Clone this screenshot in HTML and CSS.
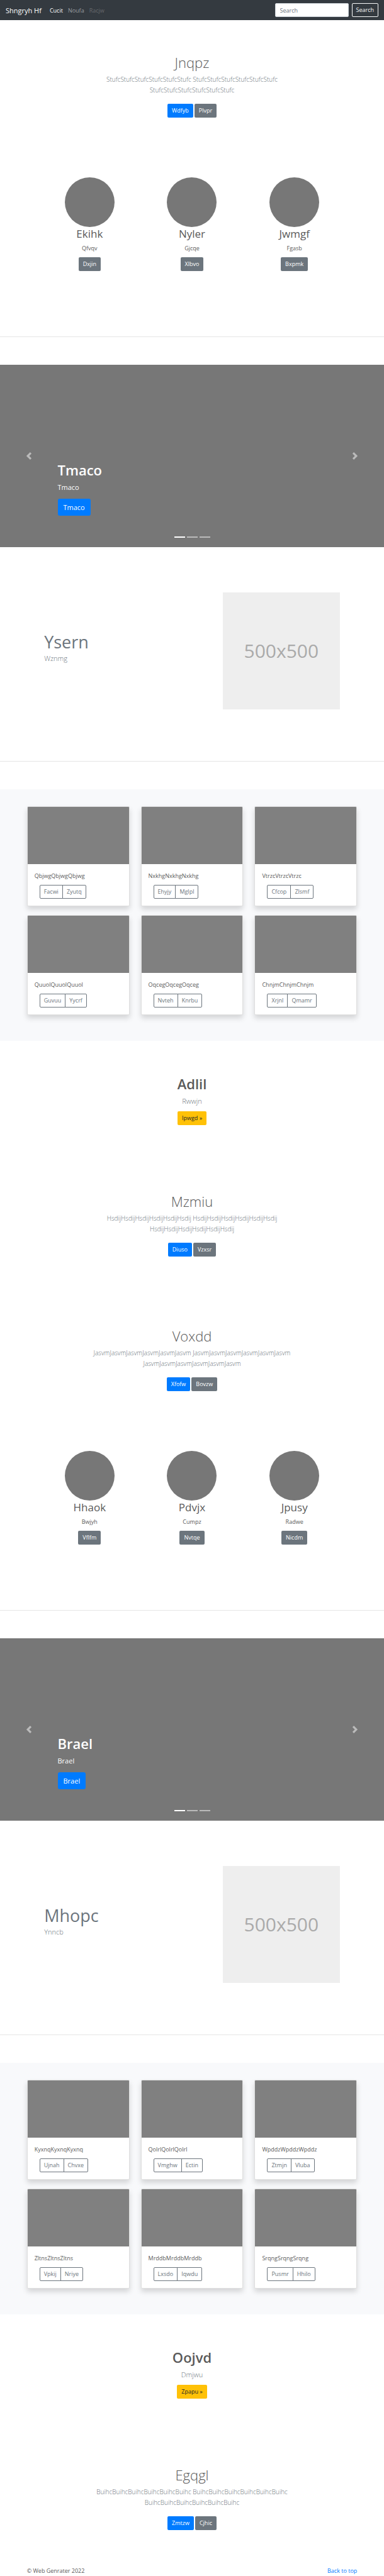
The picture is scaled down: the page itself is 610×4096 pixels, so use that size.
FILE: index.html
```html
<!DOCTYPE html>
<html lang="en">
<head>
<meta charset="utf-8">
<meta name="viewport" content="width=device-width, initial-scale=1">
<title>Shngryh Hf</title>
<link rel="stylesheet" href="styles.css">
</head>
<body id="top">
<header class="navbar">
  <a class="brand" href="#">Shngryh Hf</a>
  <nav class="nav">
    <a class="nav-link active" href="#">Cucit</a>
    <a class="nav-link" href="#">Noufa</a>
    <a class="nav-link disabled" aria-disabled="true">Racjw</a>
  </nav>
  <form class="search">
    <input class="search-input" type="search" placeholder="Search" aria-label="Search">
    <button class="btn btn-outline-light" type="submit">Search</button>
  </form>
</header>

<main>
  <section class="jumbotron">
    <h1 class="display">Jnqpz</h1>
    <p class="lead">StufcStufcStufcStufcStufcStufc StufcStufcStufcStufcStufcStufc StufcStufcStufcStufcStufcStufc</p>
    <div class="actions">
      <a class="btn btn-primary" href="#">Wdfyb</a>
      <a class="btn btn-secondary" href="#">Plvpr</a>
    </div>
  </section>

  <section class="marketing">
    <div class="profile">
      <div class="avatar"></div>
      <h2 class="profile-name">Ekihk</h2>
      <p class="profile-text">Qfvqv</p>
      <a class="btn btn-secondary" href="#">Dxjin</a>
    </div>
    <div class="profile">
      <div class="avatar"></div>
      <h2 class="profile-name">Nyler</h2>
      <p class="profile-text">Gjcqe</p>
      <a class="btn btn-secondary" href="#">Xlbvo</a>
    </div>
    <div class="profile">
      <div class="avatar"></div>
      <h2 class="profile-name">Jwmgf</h2>
      <p class="profile-text">Fgasb</p>
      <a class="btn btn-secondary" href="#">Bxpmk</a>
    </div>
  </section>

  <hr class="divider">

  <section class="carousel">
    <button class="carousel-control" type="button" aria-label="Previous">
      <svg class="chevron" viewBox="0 0 8 8"><path d="M5.25 0l-4 4 4 4 1.5-1.5L4.25 4l2.5-2.5L5.25 0z"/></svg>
    </button>
    <div class="carousel-body">
      <div class="caption">
        <h2 class="caption-title">Tmaco</h2>
        <p class="caption-text">Tmaco</p>
        <a class="btn btn-primary btn-lg" href="#">Tmaco</a>
      </div>
      <div class="indicators"><span class="indicator current"></span><span class="indicator"></span><span class="indicator"></span></div>
    </div>
    <button class="carousel-control" type="button" aria-label="Next">
      <svg class="chevron" viewBox="0 0 8 8"><path d="M2.75 0l-1.5 1.5L3.75 4l-2.5 2.5L2.75 8l4-4-4-4z"/></svg>
    </button>
  </section>

  <section class="featurette">
    <div class="featurette-copy">
      <h2 class="featurette-title">Ysern</h2>
      <p class="featurette-text">Wznmg</p>
    </div>
    <div class="placeholder">500x500</div>
  </section>

  <hr class="divider">

  <section class="album">
    <article class="card">
      <div class="card-image"></div>
      <div class="card-body">
        <p class="card-text">QbjwgQbjwgQbjwg</p>
        <div class="btn-group"><button class="btn btn-outline" type="button">Facwi</button><button class="btn btn-outline" type="button">Zyutq</button></div>
      </div>
    </article>
    <article class="card">
      <div class="card-image"></div>
      <div class="card-body">
        <p class="card-text">NxkhgNxkhgNxkhg</p>
        <div class="btn-group"><button class="btn btn-outline" type="button">Ehyjy</button><button class="btn btn-outline" type="button">Mglpl</button></div>
      </div>
    </article>
    <article class="card">
      <div class="card-image"></div>
      <div class="card-body">
        <p class="card-text">VtrzcVtrzcVtrzc</p>
        <div class="btn-group"><button class="btn btn-outline" type="button">Cfcop</button><button class="btn btn-outline" type="button">Zlsmf</button></div>
      </div>
    </article>
    <article class="card">
      <div class="card-image"></div>
      <div class="card-body">
        <p class="card-text">QuuolQuuolQuuol</p>
        <div class="btn-group"><button class="btn btn-outline" type="button">Guvuu</button><button class="btn btn-outline" type="button">Yycrf</button></div>
      </div>
    </article>
    <article class="card">
      <div class="card-image"></div>
      <div class="card-body">
        <p class="card-text">OqcegOqcegOqceg</p>
        <div class="btn-group"><button class="btn btn-outline" type="button">Nvteh</button><button class="btn btn-outline" type="button">Knrbu</button></div>
      </div>
    </article>
    <article class="card">
      <div class="card-image"></div>
      <div class="card-body">
        <p class="card-text">ChnjmChnjmChnjm</p>
        <div class="btn-group"><button class="btn btn-outline" type="button">Xrjnl</button><button class="btn btn-outline" type="button">Qmamr</button></div>
      </div>
    </article>
  </section>

  <section class="callout">
    <h2 class="callout-title">Adlil</h2>
    <p class="callout-text">Rwwjn</p>
    <a class="btn btn-warning" href="#">Ipwgd »</a>
  </section>

  <section class="jumbotron">
    <h1 class="display">Mzmiu</h1>
    <p class="lead">HsdijHsdijHsdijHsdijHsdijHsdij HsdijHsdijHsdijHsdijHsdijHsdij HsdijHsdijHsdijHsdijHsdijHsdij</p>
    <div class="actions">
      <a class="btn btn-primary" href="#">Diuso</a>
      <a class="btn btn-secondary" href="#">Vzxsr</a>
    </div>
  </section>

  <section class="jumbotron">
    <h1 class="display">Voxdd</h1>
    <p class="lead">JasvmJasvmJasvmJasvmJasvmJasvm JasvmJasvmJasvmJasvmJasvmJasvm JasvmJasvmJasvmJasvmJasvmJasvm</p>
    <div class="actions">
      <a class="btn btn-primary" href="#">Xfofw</a>
      <a class="btn btn-secondary" href="#">Bovzw</a>
    </div>
  </section>

  <section class="marketing">
    <div class="profile">
      <div class="avatar"></div>
      <h2 class="profile-name">Hhaok</h2>
      <p class="profile-text">Bwjyh</p>
      <a class="btn btn-secondary" href="#">Vflfm</a>
    </div>
    <div class="profile">
      <div class="avatar"></div>
      <h2 class="profile-name">Pdvjx</h2>
      <p class="profile-text">Cumpz</p>
      <a class="btn btn-secondary" href="#">Nvtqe</a>
    </div>
    <div class="profile">
      <div class="avatar"></div>
      <h2 class="profile-name">Jpusy</h2>
      <p class="profile-text">Radwe</p>
      <a class="btn btn-secondary" href="#">Nicdm</a>
    </div>
  </section>

  <hr class="divider">

  <section class="carousel">
    <button class="carousel-control" type="button" aria-label="Previous">
      <svg class="chevron" viewBox="0 0 8 8"><path d="M5.25 0l-4 4 4 4 1.5-1.5L4.25 4l2.5-2.5L5.25 0z"/></svg>
    </button>
    <div class="carousel-body">
      <div class="caption">
        <h2 class="caption-title">Brael</h2>
        <p class="caption-text">Brael</p>
        <a class="btn btn-primary btn-lg" href="#">Brael</a>
      </div>
      <div class="indicators"><span class="indicator current"></span><span class="indicator"></span><span class="indicator"></span></div>
    </div>
    <button class="carousel-control" type="button" aria-label="Next">
      <svg class="chevron" viewBox="0 0 8 8"><path d="M2.75 0l-1.5 1.5L3.75 4l-2.5 2.5L2.75 8l4-4-4-4z"/></svg>
    </button>
  </section>

  <section class="featurette">
    <div class="featurette-copy">
      <h2 class="featurette-title">Mhopc</h2>
      <p class="featurette-text">Ynncb</p>
    </div>
    <div class="placeholder">500x500</div>
  </section>

  <hr class="divider">

  <section class="album">
    <article class="card">
      <div class="card-image"></div>
      <div class="card-body">
        <p class="card-text">KyxnqKyxnqKyxnq</p>
        <div class="btn-group"><button class="btn btn-outline" type="button">Ujnah</button><button class="btn btn-outline" type="button">Chvxe</button></div>
      </div>
    </article>
    <article class="card">
      <div class="card-image"></div>
      <div class="card-body">
        <p class="card-text">QolrlQolrlQolrl</p>
        <div class="btn-group"><button class="btn btn-outline" type="button">Vmghw</button><button class="btn btn-outline" type="button">Ectin</button></div>
      </div>
    </article>
    <article class="card">
      <div class="card-image"></div>
      <div class="card-body">
        <p class="card-text">WpddzWpddzWpddz</p>
        <div class="btn-group"><button class="btn btn-outline" type="button">Ztmjn</button><button class="btn btn-outline" type="button">Vluba</button></div>
      </div>
    </article>
    <article class="card">
      <div class="card-image"></div>
      <div class="card-body">
        <p class="card-text">ZltnsZltnsZltns</p>
        <div class="btn-group"><button class="btn btn-outline" type="button">Vpkij</button><button class="btn btn-outline" type="button">Nriye</button></div>
      </div>
    </article>
    <article class="card">
      <div class="card-image"></div>
      <div class="card-body">
        <p class="card-text">MrddbMrddbMrddb</p>
        <div class="btn-group"><button class="btn btn-outline" type="button">Lxsdo</button><button class="btn btn-outline" type="button">Iqwdu</button></div>
      </div>
    </article>
    <article class="card">
      <div class="card-image"></div>
      <div class="card-body">
        <p class="card-text">SrqngSrqngSrqng</p>
        <div class="btn-group"><button class="btn btn-outline" type="button">Pusmr</button><button class="btn btn-outline" type="button">Hhilo</button></div>
      </div>
    </article>
  </section>

  <section class="callout">
    <h2 class="callout-title">Oojvd</h2>
    <p class="callout-text">Dmjwu</p>
    <a class="btn btn-warning" href="#">Zpapu »</a>
  </section>

  <section class="jumbotron">
    <h1 class="display">Egqgl</h1>
    <p class="lead">BuihcBuihcBuihcBuihcBuihcBuihc BuihcBuihcBuihcBuihcBuihcBuihc BuihcBuihcBuihcBuihcBuihcBuihc</p>
    <div class="actions">
      <a class="btn btn-primary" href="#">Zmtzw</a>
      <a class="btn btn-secondary" href="#">Cjhic</a>
    </div>
  </section>
</main>

<footer class="footer">
  <span>© Web Genrater 2022</span>
  <a class="footer-link" href="#top">Back to top</a>
</footer>
</body>
</html>
```
FILE: styles.css
```css
* {
  box-sizing: border-box;
}

body {
  margin: 0;
  background: #fff;
  color: #5a5a5a;
  font-family: "Open Sans", "Noto Sans", sans-serif;
  font-size: 9px;
  line-height: 13px;
}

h1, h2, p {
  margin: 0;
}

a {
  text-decoration: none;
}

/* Buttons */
.btn {
  display: inline-block;
  height: 22px;
  padding: 0 6px;
  border: 1px solid transparent;
  border-radius: 2px;
  background: transparent;
  font-family: inherit;
  font-size: 9px;
  line-height: 20px;
  text-align: center;
}

.btn-primary {
  background: #007bff;
  color: #fff;
}

.btn-secondary {
  background: #6c757d;
  color: #fff;
}

.btn-warning {
  background: #ffc107;
  color: #212529;
}

.btn-outline-light {
  border-color: #f8f9fa;
  color: #f8f9fa;
}

.btn-outline {
  border-color: #6c757d;
  color: #6c757d;
}

.btn-lg {
  height: 27px;
  padding: 0 8px;
  border-radius: 3px;
  font-size: 11px;
  line-height: 25px;
}

/* Top bar */
.navbar {
  display: flex;
  align-items: center;
  height: 32px;
  padding: 0 9px;
  background: #343a40;
}

.brand {
  margin-right: 9px;
  color: #fff;
  font-size: 11px;
}

.nav {
  display: flex;
}

.nav-link {
  padding: 0 4px;
  color: #9a9da0;
}

.nav-link.active {
  color: #fff;
}

.nav-link.disabled {
  color: #67696d;
}

.search {
  display: flex;
  gap: 5px;
  margin-left: auto;
}

.search-input {
  width: 117px;
  height: 22px;
  padding: 0 7px;
  border: 1px solid #ced4da;
  border-radius: 2px;
  background: #fff;
  color: #495057;
  font-family: inherit;
  font-size: 9px;
}

.search-input::placeholder {
  color: #6c757d;
  opacity: 1;
}

/* Intro blocks */
.jumbotron {
  padding: 54px 16px 59px;
  text-align: center;
}

.display {
  margin-bottom: 5px;
  font-size: 22px;
  font-weight: 300;
  line-height: 27px;
}

.lead {
  max-width: 380px;
  margin: 0 auto 13px;
  color: #6c757d;
  font-size: 10px;
  font-weight: 300;
  line-height: 17px;
}

.actions {
  display: flex;
  justify-content: center;
  gap: 2px;
}

/* Profiles */
.marketing {
  display: grid;
  grid-template-columns: repeat(3, 1fr);
  padding: 36px 10% 104px;
}

.profile {
  display: flex;
  flex-direction: column;
  align-items: center;
}

.avatar {
  width: 79px;
  height: 79px;
  border-radius: 50%;
  background: #777;
}

.profile-name {
  margin-bottom: 5px;
  font-size: 17px;
  font-weight: 400;
  line-height: 22px;
}

.profile-text {
  margin-bottom: 8px;
}

.divider {
  height: 1px;
  margin: 0 0 44px;
  border: 0;
  background: #e5e5e5;
}

/* Carousel */
.carousel {
  display: grid;
  grid-template-columns: 15% 1fr 15%;
  height: 290px;
  background: #777;
}

.carousel-control {
  display: flex;
  align-items: center;
  justify-content: center;
  padding: 0;
  border: 0;
  background: transparent;
  opacity: 0.5;
}

.chevron {
  width: 12px;
  height: 12px;
  fill: #fff;
}

.carousel-body {
  display: flex;
  flex-direction: column;
  justify-content: flex-end;
  color: #fff;
}

.caption-title {
  margin-bottom: 5px;
  font-size: 22px;
  font-weight: 600;
  line-height: 27px;
}

.caption-text {
  margin-bottom: 10px;
  font-size: 11px;
  line-height: 17px;
}

.indicators {
  display: flex;
  justify-content: center;
  gap: 3px;
  padding: 33px 0 15px;
}

.indicator {
  width: 17px;
  height: 2px;
  background: #fff;
  opacity: 0.5;
}

.indicator.current {
  opacity: 1;
}

/* Featurette */
.featurette {
  display: flex;
  align-items: center;
  justify-content: space-between;
  padding: 72px 11.5% 82px;
}

.featurette-copy {
  padding-bottom: 12px;
}

.featurette-title {
  color: #6c757d;
  font-size: 27px;
  font-weight: 400;
  line-height: 34px;
}

.featurette-text {
  color: #6c757d;
  font-size: 11px;
  font-weight: 300;
  line-height: 17px;
}

.placeholder {
  display: flex;
  align-items: center;
  justify-content: center;
  width: 186px;
  height: 186px;
  background: #eee;
  color: #aaa;
  font-size: 30px;
  line-height: 36px;
}

/* Cards */
.album {
  display: grid;
  grid-template-columns: repeat(3, 1fr);
  gap: 14px 18px;
  padding: 27px 7% 41px;
  background: #f8f9fb;
}

.card {
  overflow: hidden;
  border: 1px solid #dfdfdf;
  border-radius: 2px;
  background: #fff;
  box-shadow: 0 5px 9px rgba(0, 0, 0, 0.15);
}

.card-image {
  height: 91px;
  background: #808080;
}

.card-body {
  padding: 12px 11px 11px;
}

.card-text {
  margin-bottom: 8px;
}

.btn-group {
  display: flex;
  margin-left: 8px;
}

.btn-group .btn:first-child {
  border-radius: 2px 0 0 2px;
}

.btn-group .btn:last-child {
  margin-left: -1px;
  border-radius: 0 2px 2px 0;
}

/* Callout */
.callout {
  display: flex;
  flex-direction: column;
  align-items: center;
  padding: 55px 16px 54px;
}

.callout-title {
  margin-bottom: 5px;
  font-size: 22px;
  font-weight: 600;
  line-height: 27px;
}

.callout-text {
  margin-bottom: 8px;
  color: #6c757d;
  font-size: 11px;
  font-weight: 300;
  line-height: 17px;
}

/* Footer */
.footer {
  display: flex;
  justify-content: space-between;
  padding: 0 7%;
  line-height: 12px;
}

.footer-link {
  color: #007bff;
}
```
